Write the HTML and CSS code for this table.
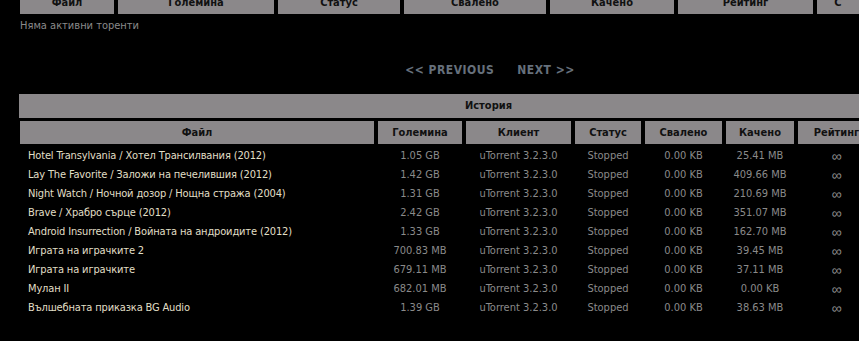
FILE: index.html
```html
<!DOCTYPE html>
<html lang="bg">
<head>
<meta charset="utf-8">
<title>История</title>
<link rel="stylesheet" href="styles.css">
</head>
<body>
<div class="page">
  <table class="grid top">
    <colgroup>
      <col class="t1"><col class="t2"><col class="t3"><col class="t4"><col class="t5"><col class="t6"><col class="t7"><col class="t8">
    </colgroup>
    <tr>
      <th>Файл</th><th>Големина</th><th>Статус</th><th>Свалено</th><th>Качено</th><th>Рейтинг</th><th>С</th><th>Време</th>
    </tr>
  </table>
  <div class="empty">Няма активни торенти</div>
  <div class="pager"><a href="#">&lt;&lt; PREVIOUS</a><a href="#">NEXT &gt;&gt;</a></div>
  <div class="history-bar">История</div>
  <table class="grid hist">
    <colgroup>
      <col class="h1"><col class="h2"><col class="h3"><col class="h4"><col class="h5"><col class="h6"><col class="h7"><col class="h8">
    </colgroup>
    <tr>
      <th>Файл</th><th>Големина</th><th>Клиент</th><th>Статус</th><th>Свалено</th><th>Качено</th><th>Рейтинг</th><th>Време</th>
    </tr>
    <tr><td class="name">Hotel Transylvania / Хотел Трансилвания (2012)</td><td>1.05 GB</td><td>uTorrent 3.2.3.0</td><td>Stopped</td><td>0.00 KB</td><td>25.41 MB</td><td class="inf">∞</td><td>-</td></tr>
    <tr><td class="name">Lay The Favorite / Заложи на печелившия (2012)</td><td>1.42 GB</td><td>uTorrent 3.2.3.0</td><td>Stopped</td><td>0.00 KB</td><td>409.66 MB</td><td class="inf">∞</td><td>-</td></tr>
    <tr><td class="name">Night Watch / Ночной дозор / Нощна стража (2004)</td><td>1.31 GB</td><td>uTorrent 3.2.3.0</td><td>Stopped</td><td>0.00 KB</td><td>210.69 MB</td><td class="inf">∞</td><td>-</td></tr>
    <tr><td class="name">Brave / Храбро сърце (2012)</td><td>2.42 GB</td><td>uTorrent 3.2.3.0</td><td>Stopped</td><td>0.00 KB</td><td>351.07 MB</td><td class="inf">∞</td><td>-</td></tr>
    <tr><td class="name">Android Insurrection / Войната на андроидите (2012)</td><td>1.33 GB</td><td>uTorrent 3.2.3.0</td><td>Stopped</td><td>0.00 KB</td><td>162.70 MB</td><td class="inf">∞</td><td>-</td></tr>
    <tr><td class="name">Играта на играчките 2</td><td>700.83 MB</td><td>uTorrent 3.2.3.0</td><td>Stopped</td><td>0.00 KB</td><td>39.45 MB</td><td class="inf">∞</td><td>-</td></tr>
    <tr><td class="name">Играта на играчките</td><td>679.11 MB</td><td>uTorrent 3.2.3.0</td><td>Stopped</td><td>0.00 KB</td><td>37.11 MB</td><td class="inf">∞</td><td>-</td></tr>
    <tr><td class="name">Мулан II</td><td>682.01 MB</td><td>uTorrent 3.2.3.0</td><td>Stopped</td><td>0.00 KB</td><td>0.00 KB</td><td class="inf">∞</td><td>-</td></tr>
    <tr><td class="name">Вълшебната приказка BG Audio</td><td>1.39 GB</td><td>uTorrent 3.2.3.0</td><td>Stopped</td><td>0.00 KB</td><td>38.63 MB</td><td class="inf">∞</td><td>-</td></tr>
  </table>
</div>
</body>
</html>
```
FILE: styles.css
```css
html, body {
  margin: 0;
  padding: 0;
  background: #000;
}
body {
  font-family: "DejaVu Sans Condensed", "Liberation Sans", sans-serif;
  font-size: 11px;
  color: #8a8a8a;
  overflow: hidden;
}
.page {
  width: 946px;
  padding-left: 16px;
}
.grid {
  border-collapse: separate;
  border-spacing: 4px;
  table-layout: fixed;
  width: 946px;
}
.grid th {
  background: #8b888a;
  color: #111;
  font-weight: bold;
  font-size: 11px;
  height: 23px;
  padding: 0;
  text-align: center;
  white-space: nowrap;
  overflow: hidden;
}
.top {
  margin-top: -13px;
}
.t1 { width: 94px; }
.t2 { width: 156px; }
.t3 { width: 122px; }
.t4 { width: 142px; }
.t5 { width: 124px; }
.t6 { width: 135px; }
.t7 { width: 42px; }
.t8 { width: 95px; }

.empty {
  margin-top: 1px;
  padding-left: 4px;
  line-height: 14px;
  color: #8a8a8a;
}
.pager {
  margin-top: 29px;
  display: flex;
  justify-content: center;
  gap: 23px;
  line-height: 16px;
  padding-left: 2px;
}
.pager a {
  color: #66707c;
  font-weight: bold;
  font-size: 12px;
  letter-spacing: 0.5px;
  text-decoration: none;
}
.history-bar {
  margin-top: 16px;
  margin-left: 3px;
  width: 939px;
  height: 24px;
  line-height: 24px;
  background: #8b888a;
  color: #111;
  font-weight: bold;
  text-align: center;
}
.hist {
  margin-top: -1px;
}
.h1 { width: 354px; }
.h2 { width: 84px; }
.h3 { width: 105px; }
.h4 { width: 66px; }
.h5 { width: 77px; }
.h6 { width: 68px; }
.h7 { width: 77px; }
.h8 { width: 79px; }
.hist td {
  height: 14px;
  padding: 1px 0 0;
  text-align: center;
  white-space: nowrap;
  color: #8a8a8a;
  line-height: 14px;
}
.hist td.name {
  text-align: left;
  padding-left: 8px;
  color: #e0dfc6;
  letter-spacing: -0.15px;
}
.hist td.inf {
  font-family: "Liberation Sans", sans-serif;
  font-size: 14px;
}
```
